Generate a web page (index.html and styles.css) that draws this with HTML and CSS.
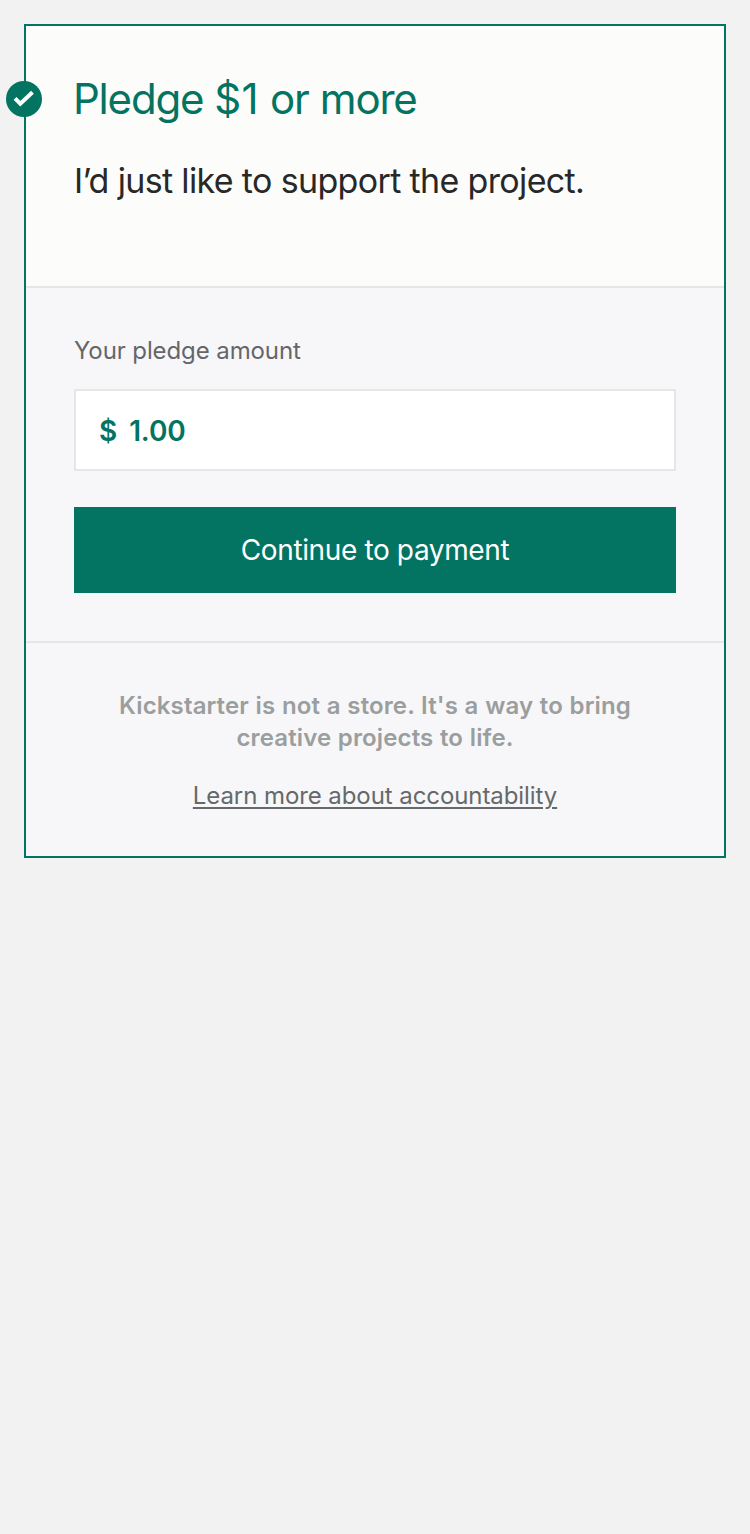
FILE: index.html
```html
<!DOCTYPE html>
<html lang="en">
<head>
<meta charset="utf-8">
<title>Pledge</title>
<link rel="stylesheet" href="styles.css">
</head>
<body>
<main class="card">
  <svg class="check" viewBox="0 0 36 36" aria-hidden="true"><circle cx="18" cy="18" r="18"/><path d="M9 17.3l5.3 5.3L26.5 11.2"/></svg>
  <section class="reward">
    <h1 class="title">Pledge <span class="price">$1</span> or more</h1>
    <p class="description">I’d just like to support the project.</p>
  </section>
  <form class="pledge">
    <span class="label">Your pledge amount</span>
    <div class="amount"><span class="currency">$</span><span class="value">1.00</span></div>
    <button class="submit" type="button">Continue to payment</button>
  </form>
  <footer class="notice">
    <p class="statement">Kickstarter is not a store. It's a way to bring<br>creative projects to life.</p>
    <a class="link" href="#">Learn more about accountability</a>
  </footer>
</main>
</body>
</html>
```

FILE: styles.css
```css
* { box-sizing: border-box; }
body {
  margin: 0;
  padding: 24px;
  min-height: 1534px;
  background: #f2f2f2;
  font-family: Inter, "Liberation Sans", sans-serif;
}
h1, p { margin: 0; font-weight: 400; }
.card {
  position: relative;
  height: 834px;
  border: 2px solid #037362;
  background: #f7f7f9;
}
.check {
  position: absolute;
  left: -20px;
  top: 55px;
  width: 36px;
  height: 36px;
  fill: #037362;
}
.check path { fill: none; stroke: #fff; stroke-width: 4; }
.reward {
  height: 262px;
  padding: 48px;
  background: #fcfcfa;
  border-bottom: 2px solid #e6e6e6;
}
.title {
  margin-left: -1px;
  color: #037362;
  font-size: 42px;
  line-height: 50px;
  letter-spacing: -1.2px;
  word-spacing: 0.5px;
}
.price { letter-spacing: 0.3px; }
.description { margin-top: 32px; color: #282828; font-size: 34px; line-height: 50px; letter-spacing: -0.65px; }
.pledge { height: 355px; padding: 48px; border-bottom: 2px solid #e6e6e6; }
.label { display: block; color: #656669; font-size: 24px; line-height: 30px; margin-bottom: 23px; letter-spacing: -0.1px; }
.amount {
  display: flex;
  align-items: center;
  gap: 12px;
  height: 82px;
  padding: 1px 23px 0;
  border: 2px solid #e6e6e6;
  background: #fff;
  color: #037362;
  font-size: 28px;
  font-weight: 600;
  letter-spacing: -0.1px;
}
.submit {
  display: block;
  width: 100%;
  height: 86px;
  margin-top: 36px;
  padding: 0;
  border: 0;
  background: #037362;
  color: #fff;
  font: inherit;
  font-size: 28px;
  letter-spacing: -0.37px;
}
.notice { padding: 47px 48px; text-align: center; }
.statement { color: #9b9e9e; font-size: 24px; line-height: 32px; font-weight: 600; margin-bottom: 26px; letter-spacing: 0.12px; word-spacing: 0.5px; }
.link { color: #656969; font-size: 24px; line-height: 32px; letter-spacing: -0.08px; text-decoration-thickness: 2px; text-underline-offset: 3px; }
```
